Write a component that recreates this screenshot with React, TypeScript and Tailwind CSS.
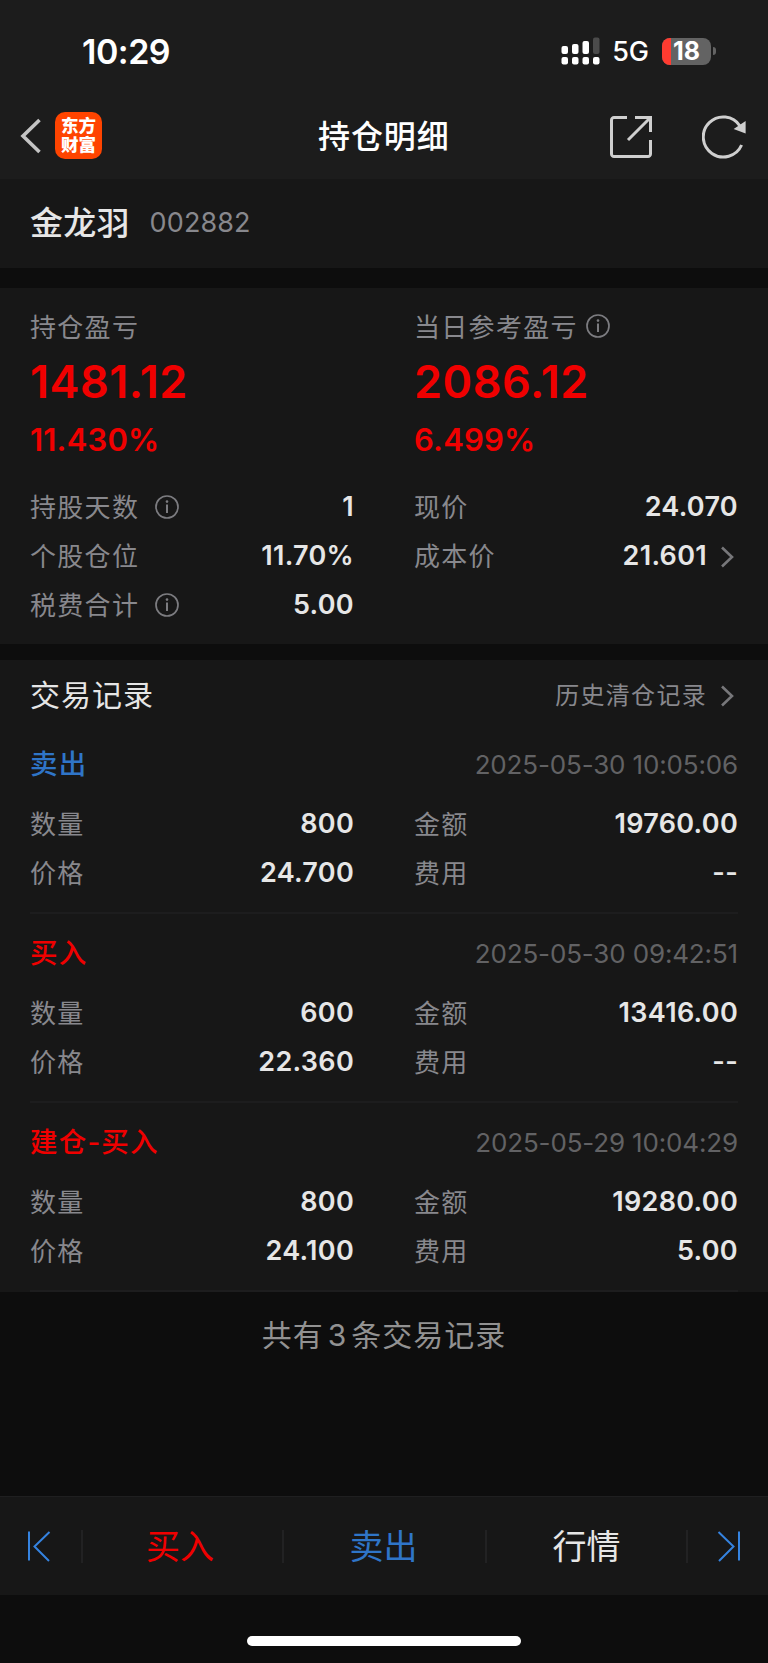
import type { ReactNode } from 'react'
import clsx from 'clsx'

type TradeRecord = {
  type: string
  side: 'buy' | 'sell'
  time: string
  quantity: string
  amount: string
  price: string
  fee: string
}

const records: TradeRecord[] = [
  { type: '卖出', side: 'sell', time: '2025-05-30 10:05:06', quantity: '800', amount: '19760.00', price: '24.700', fee: '--' },
  { type: '买入', side: 'buy', time: '2025-05-30 09:42:51', quantity: '600', amount: '13416.00', price: '22.360', fee: '--' },
  { type: '建仓-买入', side: 'buy', time: '2025-05-29 10:04:29', quantity: '800', amount: '19280.00', price: '24.100', fee: '5.00' },
]

function InfoIcon({ className }: { className?: string }) {
  return (
    <svg className={clsx('mb-[2px] h-6 w-6 text-[#7c7c80]', className)} viewBox="0 0 24 24" fill="none" stroke="currentColor">
      <circle cx="12" cy="12" r="11" strokeWidth="1.7" />
      <path d="M12 9.5v8.5" strokeWidth="2" />
      <circle cx="12" cy="6.6" r="1.3" fill="currentColor" stroke="none" />
    </svg>
  )
}

function ChevronIcon() {
  return (
    <svg className="ml-[14px] mr-[4px] h-[22px] w-[13px]" viewBox="0 0 13 22" fill="none" stroke="#77777a" strokeWidth="2.6">
      <path d="M1 1.5 11 11 1 20.5" />
    </svg>
  )
}

function Row({ label, value, info, arrow }: { label: string; value: string; info?: boolean; arrow?: boolean }) {
  return (
    <div className="flex h-[49px] items-center">
      <span className="text-[26px] tracking-[1.3px] text-[#88888d]">{label}</span>
      {info && <InfoIcon className="ml-4" />}
      <span className="ml-auto text-[27px] font-semibold tracking-[0.3px] text-[#e6e6e6]">{value}</span>
      {arrow && <ChevronIcon />}
    </div>
  )
}

function StatusBar() {
  return (
    <div className="flex h-[98px] items-center pl-[82px] pr-[52px] pt-1">
      <span className="text-[34px] font-semibold tracking-[-0.5px] text-white">10:29</span>
      <svg className="mb-px ml-auto h-7 w-[39px]" viewBox="0 0 39 28" fill="#fff">
        <rect x="0.5" y="9" width="6.5" height="8" rx="2" />
        <rect x="11" y="7" width="6.5" height="10" rx="2" />
        <rect x="21.5" y="4" width="6.5" height="13" rx="2" />
        <rect x="32" y="0.5" width="6.5" height="16.5" rx="2" fill="#4b4b4b" />
        <rect x="0.5" y="20" width="6.5" height="7.5" rx="2" />
        <rect x="11" y="20" width="6.5" height="7.5" rx="2" />
        <rect x="21.5" y="20" width="6.5" height="7.5" rx="2" />
        <rect x="32" y="20" width="6.5" height="7.5" rx="2" />
      </svg>
      <span className="ml-3 pt-[3px] text-[27px] font-medium text-white">5G</span>
      <div className="relative ml-[13px] flex h-[27px] w-[49px] items-center justify-center rounded-[8px] bg-[#636363]">
        <div className="absolute inset-y-0 left-0 w-[9px] rounded-l-[8px] bg-[#ff3b30]" />
        <span className="relative text-[25px] font-bold leading-none text-white">18</span>
      </div>
      <div className="ml-[2px] h-2 w-[3px] rounded-r-full bg-[#636363]" />
    </div>
  )
}

function NavBar() {
  return (
    <div className="flex h-[81px] items-center pb-[3px] pl-5 pr-[22px]">
      <svg className="mb-[2px] h-9 w-[22px]" viewBox="0 0 22 36" fill="none" stroke="#c4c4c4" strokeWidth="3.6">
        <path d="M19.5 2 3 18l16.5 16" />
      </svg>
      <div className="mb-[3px] ml-[13px] flex h-[47px] w-[47px] flex-col items-center justify-center rounded-[10px] bg-[#ff4400] pb-px text-[17.5px] font-black leading-[19px] text-white">
        <span>东方</span>
        <span>财富</span>
      </div>
      <h1 className="ml-[216px] text-[32px] font-medium tracking-[0.9px] text-white">持仓明细</h1>
      <svg className="ml-auto h-[42px] w-[42px]" viewBox="0 0 42 42" fill="none" stroke="#cfcfcf" strokeWidth="3">
        <path d="M17 1.5H4A2.5 2.5 0 0 0 1.5 4v34A2.5 2.5 0 0 0 4 40.5h34a2.5 2.5 0 0 0 2.5-2.5V24" />
        <path d="M25 1.5h15.5V16M40 2 18 24" />
      </svg>
      <svg className="ml-[50px] h-[44px] w-[44px]" viewBox="0 0 44 44" fill="none" stroke="#cfcfcf" strokeWidth="3">
        <path d="M39.6 30A20 20 0 1 1 38 11" />
        <path d="M43.6 6v12.6L31.6 14z" fill="#cfcfcf" stroke="none" />
      </svg>
    </div>
  )
}

function ProfitBlock({ label, amount, percent, info }: { label: string; amount: string; percent: string; info?: boolean }) {
  return (
    <div>
      <div className="flex h-10 items-center text-[26px] tracking-[1.3px] text-[#88888d]">
        {label}
        {info && <InfoIcon className="ml-[8px]" />}
      </div>
      <div className="flex h-[70px] items-center text-[45px] font-semibold tracking-[0.5px] text-[#f00000]">{amount}</div>
      <div className="flex h-[46px] items-center text-[31px] font-semibold tracking-[0.2px] text-[#f00000]">{percent}</div>
    </div>
  )
}

function TradeItem({ record }: { record: TradeRecord }) {
  return (
    <div className="h-[189px] border-b-2 border-[#1d1d1e] pt-[14px]">
      <div className="flex h-[52px] items-center justify-between">
        <span
          className={clsx(
            'text-[27.5px] font-medium tracking-[1.2px]',
            record.side === 'buy' ? 'text-[#f00000]' : 'text-[#2f75c8]'
          )}
        >
          {record.type}
        </span>
        <span className="mb-[2px] text-[26px] tracking-[-0.15px] text-[#626264]">{record.time}</span>
      </div>
      <div className="mt-[9px] grid grid-cols-2 gap-x-[60px]">
        <Row label="数量" value={record.quantity} />
        <Row label="金额" value={record.amount} />
        <Row label="价格" value={record.price} />
        <Row label="费用" value={record.fee} />
      </div>
    </div>
  )
}

function TabButton({ className, children }: { className?: string; children: ReactNode }) {
  return (
    <button className={clsx('flex h-[33px] items-center justify-center border-l-2 border-[#222223] text-[34px]', className)}>
      {children}
    </button>
  )
}

export default function App() {
  return (
    <div className="flex h-[1663px] w-[768px] flex-col bg-[#0d0d0d] font-['Inter','Noto_Sans_CJK_SC',sans-serif]">
      <header className="bg-[#1c1c1c]">
        <StatusBar />
        <NavBar />
      </header>

      <section className="flex h-[89px] items-center bg-[#171717] px-[30px]">
        <span className="text-[33px] font-medium tracking-[0.2px] text-[#e6e6e6]">金龙羽</span>
        <span className="ml-5 text-[27px] tracking-[0.1px] text-[#88888d]">002882</span>
      </section>

      {/* 盈亏 */}
      <section className="mt-5 h-[356px] bg-[#171717] px-[30px] pt-[19px]">
        <div className="grid grid-cols-2 gap-x-[60px]">
          <ProfitBlock label="持仓盈亏" amount="1481.12" percent="11.430%" />
          <ProfitBlock label="当日参考盈亏" amount="2086.12" percent="6.499%" info />
        </div>
        <div className="mt-5 grid grid-cols-2 gap-x-[60px]">
          <Row label="持股天数" value="1" info />
          <Row label="现价" value="24.070" />
          <Row label="个股仓位" value="11.70%" />
          <Row label="成本价" value="21.601" arrow />
          <Row label="税费合计" value="5.00" info />
        </div>
      </section>

      {/* 交易记录 */}
      <section className="mt-4 bg-[#171717] px-[30px]">
        <div className="flex h-[65px] items-center pt-[6px]">
          <h2 className="text-[30px] tracking-[1px] text-[#e6e6e6]">交易记录</h2>
          <span className="ml-auto text-[24px] tracking-[1.3px] text-[#88888d]">历史清仓记录</span>
          <ChevronIcon />
        </div>
        {records.map(record => (
          <TradeItem key={record.time} record={record} />
        ))}
      </section>

      <p className="mt-[23px] text-center text-[30px] leading-10 tracking-[1px] text-[#929292]">
        共有<span className="mx-1">3</span>条交易记录
      </p>

      <nav className="mt-auto flex h-[99px] items-center border-t border-[#1f1f20] bg-[#171717]">
        <button className="flex w-[81px] justify-center pr-1">
          <svg className="h-[31px] w-6" viewBox="0 0 24 31" fill="none" stroke="#3583e0" strokeWidth="2">
            <path d="M2 0.5v29M22.5 1 7.5 15.5 22 30" />
          </svg>
        </button>
        <TabButton className="w-[201px] pr-[5px] text-[#f00000]">买入</TabButton>
        <TabButton className="w-[203px] pr-[2px] text-[#2f75c8]">卖出</TabButton>
        <TabButton className="w-[201px] text-[#e6e6e6]">行情</TabButton>
        <TabButton className="w-[82px] pl-[2px]">
          <svg className="h-[31px] w-6" viewBox="0 0 24 31" fill="none" stroke="#3583e0" strokeWidth="2">
            <path d="M22 0.5v29M1.5 1l15 14.5L2 30" />
          </svg>
        </TabButton>
      </nav>

      <div className="flex h-[68px] justify-center pt-[41px]">
        <div className="h-[10px] w-[274px] rounded-full bg-white" />
      </div>
    </div>
  )
}
